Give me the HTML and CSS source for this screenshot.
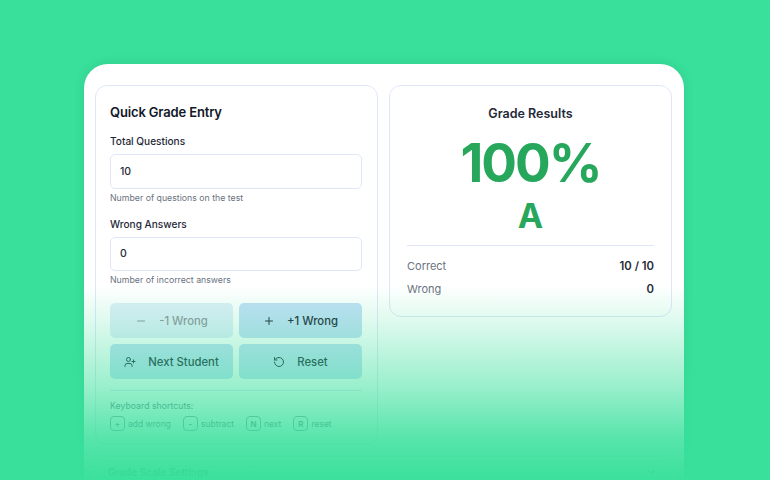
FILE: index.html
```html
<!DOCTYPE html>
<html lang="en">

<head>
    <meta charset="UTF-8">
    <meta name="viewport" content="width=device-width, initial-scale=1.0">
    <title>Quick Grade Entry</title>

    <link rel="stylesheet" href="styles.css">
</head>

<body>
    <main class="shell">
        <div class="columns">
            <section class="card entry">
                <h2>Quick Grade Entry</h2>

                <div class="field">
                    <label for="total">Total Questions</label>
                    <input id="total" type="text" value="10">
                    <p class="hint">Number of questions on the test</p>
                </div>

                <div class="field">
                    <label for="wrong">Wrong Answers</label>
                    <input id="wrong" type="text" value="0">
                    <p class="hint">Number of incorrect answers</p>
                </div>

                <div class="actions">
                    <button class="btn disabled">
                        <svg viewBox="0 0 24 24"><path d="M5 12h14"/></svg>
                        -1 Wrong
                    </button>
                    <button class="btn">
                        <svg viewBox="0 0 24 24"><path d="M5 12h14M12 5v14"/></svg>
                        +1 Wrong
                    </button>
                    <button class="btn">
                        <svg viewBox="0 0 24 24"><path d="M16 21v-2a4 4 0 0 0-4-4H6a4 4 0 0 0-4 4v2"/><circle cx="9" cy="7" r="4"/><path d="M19 8v6M22 11h-6"/></svg>
                        Next Student
                    </button>
                    <button class="btn">
                        <svg viewBox="0 0 24 24"><path d="M3 12a9 9 0 1 0 9-9 9.75 9.75 0 0 0-6.74 2.74L3 8"/><path d="M3 3v5h5"/></svg>
                        Reset
                    </button>
                </div>

                <div class="shortcuts">
                    <p>Keyboard shortcuts:</p>
                    <div class="keys">
                        <span class="key"><kbd>+</kbd> add wrong</span>
                        <span class="key"><kbd>-</kbd> subtract</span>
                        <span class="key"><kbd>N</kbd> next</span>
                        <span class="key"><kbd>R</kbd> reset</span>
                    </div>
                </div>
            </section>

            <section class="card results">
                <h3>Grade Results</h3>
                <div class="percent">100%</div>
                <div class="letter">A</div>
                <div class="stats">
                    <div class="stat"><span>Correct</span><strong>10 / 10</strong></div>
                    <div class="stat"><span>Wrong</span><strong>0</strong></div>
                </div>
            </section>
        </div>

        <section class="card settings">
            <span>Grade Scale Settings</span>
            <svg viewBox="0 0 24 24"><path d="m6 9 6 6 6-6"/></svg>
        </section>
    </main>

    <div class="fade"></div>
</body>

</html>
```

FILE: styles.css
```css
* {
    padding: 0;
    margin: 0;
    box-sizing: border-box;
    font-family: Inter, "Liberation Sans", sans-serif;
    font-optical-sizing: none;
}

html,
body {
    height: 480px;
    overflow: hidden;
}

body {
    background-color: #38e09b;
    color: #111827;
}

svg {
    fill: none;
    stroke: currentColor;
    stroke-width: 2;
    stroke-linecap: round;
    stroke-linejoin: round;
}

.shell {
    width: 600px;
    height: 416px;
    margin: 64px 0 0 84px;
    padding: 21px 11px;
    overflow: hidden;
    background-color: white;
    border-radius: 24px 24px 0 0;
    box-shadow: 0 0 12px rgba(0, 0, 0, 0.1);
}

.columns {
    display: grid;
    grid-template-columns: 283px 283px;
    gap: 11px;
    align-items: start;
}

.card {
    border: 1px solid #dfe7f7;
    border-radius: 12px;
    background-color: white;
}

.entry {
    height: 360px;
    padding: 17px 15px 0 14px;
}

.entry h2 {
    font-size: 13px;
    line-height: 18px;
    font-weight: 600;
    letter-spacing: -0.15px;
    margin-bottom: 13px;
}

.field {
    margin-bottom: 13px;
}

.field label {
    display: block;
    font-size: 10.1px;
    line-height: 14px;
    font-weight: 500;
    color: #1f2937;
    margin-bottom: 6px;
}

.field input {
    display: block;
    width: 100%;
    height: 34.5px;
    padding: 0 9px;
    border: 1px solid #dfe7f7;
    border-radius: 5px;
    font-size: 10.5px;
    font-weight: 500;
    color: #1f2937;
    background-color: white;
}

.hint {
    margin-top: 3px;
    font-size: 8.75px;
    line-height: 12px;
    color: #6b7280;
}

.actions {
    display: grid;
    grid-template-columns: 1fr 1fr;
    gap: 6px;
    margin-top: 17px;
    padding-bottom: 11px;
    border-bottom: 1px solid #dfe7f7;
}

.btn {
    height: 35px;
    display: flex;
    align-items: center;
    justify-content: center;
    gap: 12px;
    border: none;
    border-radius: 5px;
    font-size: 11.3px;
    font-weight: 500;
    color: #1f2937;
    background-color: #c2dff5;
}

.btn svg {
    width: 12px;
    height: 12px;
}

.btn.disabled {
    opacity: 0.5;
}

.shortcuts {
    margin-top: 9px;
    font-size: 8.75px;
    line-height: 12px;
    color: #6b7280;
}

.keys {
    display: flex;
    gap: 12px;
    margin-top: 4px;
    font-size: 8.5px;
}

.key {
    display: flex;
    align-items: center;
    gap: 3px;
}

kbd {
    width: 15px;
    height: 15px;
    display: flex;
    align-items: center;
    justify-content: center;
    border: 1px solid #8b95a5;
    border-radius: 4px;
    font-size: 8px;
    font-weight: 600;
}

.results {
    height: 232px;
    padding: 19px 17px 0;
    text-align: center;
}

.results h3 {
    font-size: 12.5px;
    line-height: 18px;
    font-weight: 600;
    color: #1f2937;
}

.percent {
    margin-top: 8px;
    font-size: 53px;
    line-height: 64px;
    font-weight: 700;
    letter-spacing: -2px;
    color: #27a75c;
}

.letter {
    font-size: 34px;
    line-height: 42px;
    font-weight: 700;
    color: #27a75c;
}

.stats {
    margin-top: 8px;
    padding-top: 13px;
    border-top: 1px solid #dfe7f7;
    display: flex;
    flex-direction: column;
    gap: 9px;
}

.stat {
    display: flex;
    justify-content: space-between;
    font-size: 11px;
    line-height: 14px;
    color: #6b7280;
}

.stat strong {
    font-size: 11.3px;
    font-weight: 600;
    color: #1f2937;
}

.settings {
    margin-top: 11px;
    height: 44px;
    padding: 8px 15px 0 12px;
    display: flex;
    align-items: flex-start;
    justify-content: space-between;
    font-size: 10px;
    line-height: 14px;
    font-weight: 600;
    color: #1f2937;
}

.settings svg {
    width: 12px;
    height: 12px;
    margin-top: 1px;
}

/* green wash over the bottom of the window */
.fade {
    position: absolute;
    left: 0;
    right: 0;
    top: 285px;
    height: 195px;
    background: linear-gradient(to bottom, rgba(56, 224, 155, 0) 0, rgba(56, 224, 155, 0.16) 35px, rgba(56, 224, 155, 0.5) 100px, rgba(56, 224, 155, 0.85) 155px, rgba(56, 224, 155, 0.96) 187px, rgba(56, 224, 155, 0.98) 195px);
}
```
